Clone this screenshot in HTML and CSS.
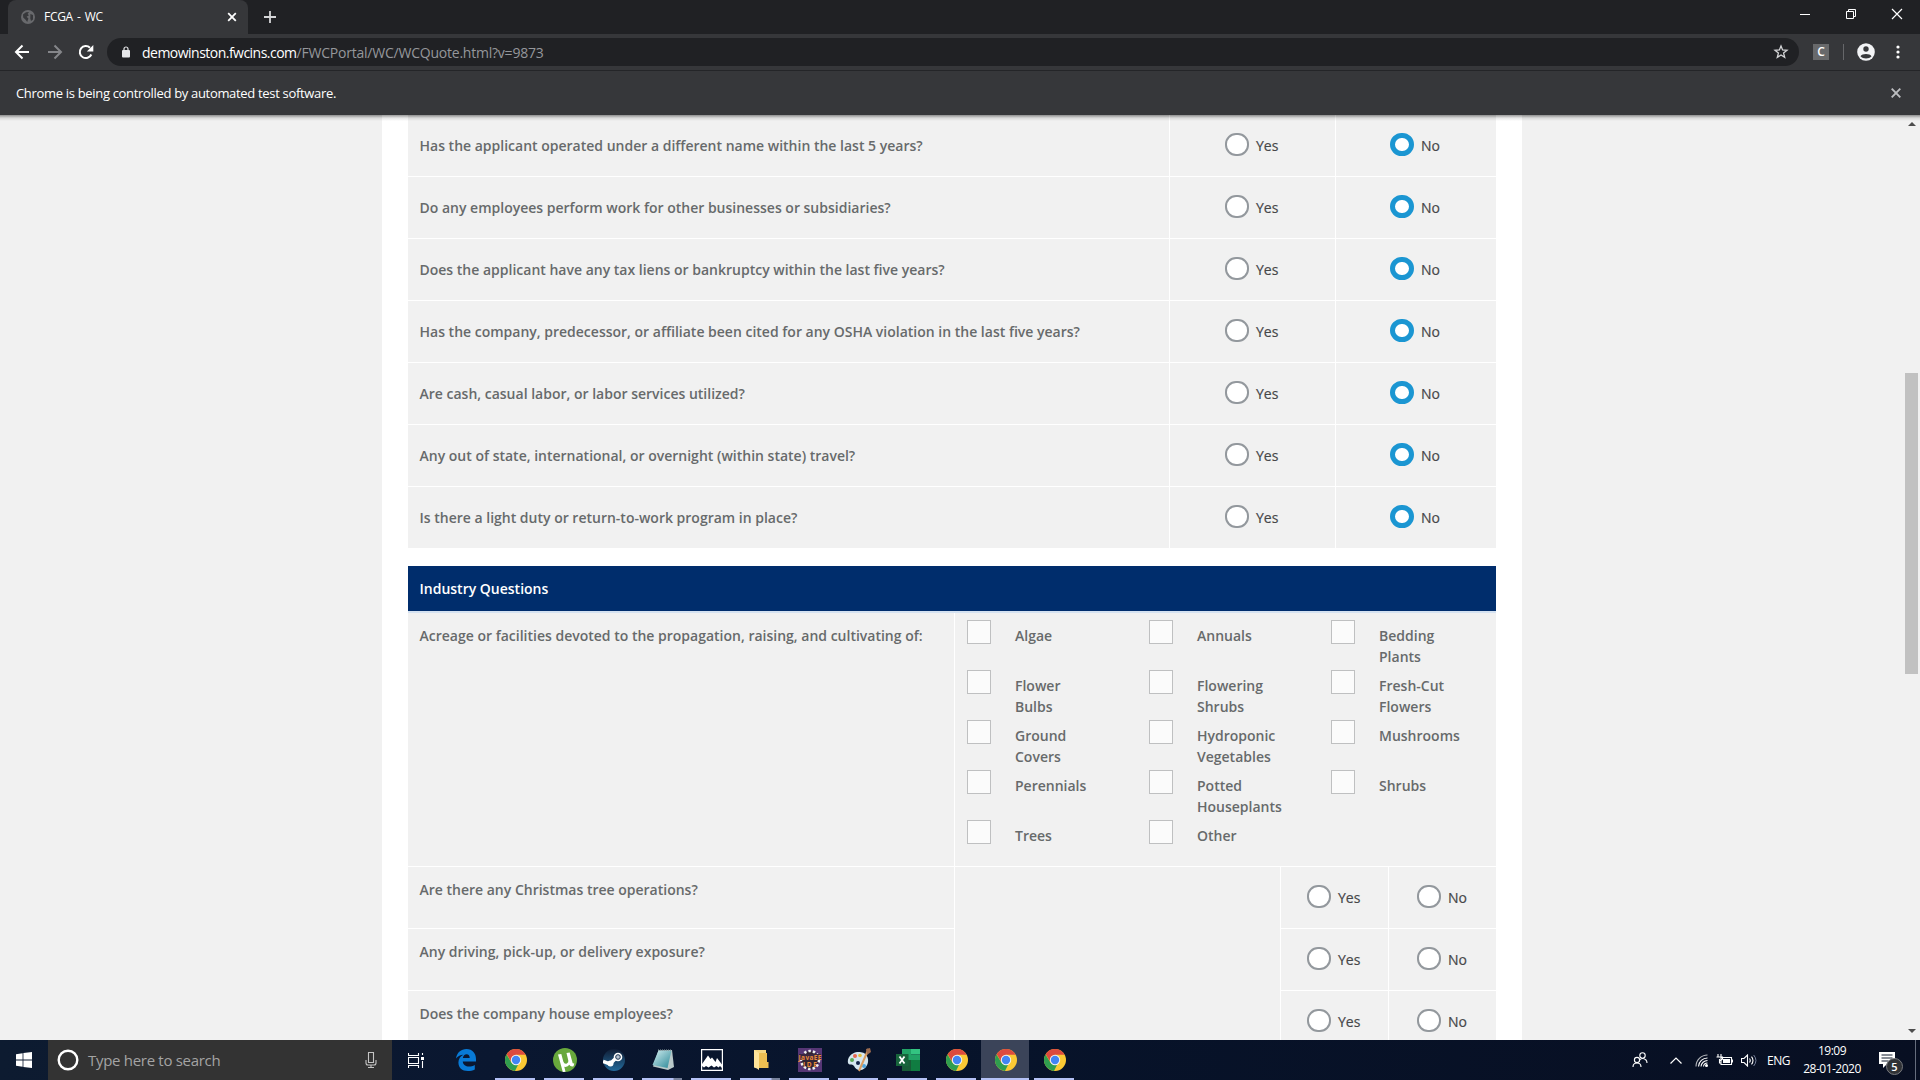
FILE: index.html
```html
<!DOCTYPE html>
<html lang="en">
<head>
<meta charset="utf-8">
<title>FCGA - WC</title>
<link rel="stylesheet" href="styles.css">
</head>
<body>
<svg class="defs" width="0" height="0">
  <defs>
    <symbol id="chrome" viewBox="0 0 22 22">
      <circle cx="11" cy="11" r="11" fill="#fbc934"/>
      <path d="M11 0A11 11 0 0 1 20.6 5.7H11L6.6 13.5 1.7 5.2A11 11 0 0 1 11 0z" fill="#dd4b3e"/>
      <path d="M1.5 5.4L6.5 13.8 11 16.2 13.2 15.6 10 21.95A11 11 0 0 1 1.5 5.4z" fill="#2f9e4f"/>
      <circle cx="11" cy="11" r="5.2" fill="#f4f4f0"/>
      <circle cx="11" cy="11" r="4.2" fill="#4285f4"/>
    </symbol>
  </defs>
</svg>
<div class="screen">
  <header class="tabs">
    <div class="tab">
      <svg class="favicon" width="14" height="14" viewBox="0 0 14 14"><circle cx="7" cy="7" r="7" fill="#68696c"/><path d="M2 4.5L5 2.2 8 2 6.6 4 8 5.2 5.6 6.8 7.4 8.5 6.2 12 4.6 9.8 2.2 7.6zM9.4 4L12 5v4.5L10 11l-.7-2.5z" fill="#37383b"/></svg>
      <span class="tab-title">FCGA - WC</span>
      <svg class="tab-close" width="10" height="10" viewBox="0 0 10 10"><path d="M1.2 1.2l7.6 7.6M8.8 1.2L1.2 8.8" stroke="#fff" stroke-width="1.8"/></svg>
    </div>
    <svg class="new-tab" width="12" height="12" viewBox="0 0 12 12"><path d="M6 0v12M0 6h12" stroke="#d5d6d8" stroke-width="1.8"/></svg>
    <div class="window-buttons">
      <svg width="46" height="28" viewBox="0 0 46 28"><path d="M18 14.5h10" stroke="#fff"/></svg>
      <svg width="46" height="28" viewBox="0 0 46 28"><path d="M18.5 11.5h7v7h-7zM20.5 11.500v-2h7v7h-2" fill="none" stroke="#fff"/></svg>
      <svg width="46" height="28" viewBox="0 0 46 28"><path d="M18 9l10 10M28 9L18 19" stroke="#fff" stroke-width="1.2"/></svg>
    </div>
  </header>
  <div class="toolbar">
    <svg width="32" height="36" viewBox="0 0 32 36"><path d="M22 18H9.500M15.500 11.500L9 18l6.500 6.500" fill="none" stroke="#fff" stroke-width="2"/></svg>
    <svg width="32" height="36" viewBox="0 0 32 36"><path d="M9 18h12.500M15.500 11.500L22 18l-6.500 6.500" fill="none" stroke="#85868a" stroke-width="2"/></svg>
    <svg width="32" height="36" viewBox="0 0 32 36"><path d="M20.300 20.500A6 6 0 1 1 19 13.800" fill="none" stroke="#fff" stroke-width="2"/><path d="M22.300 11v6.500h-6.500z" fill="#fff"/></svg>
    <div class="address">
      <svg width="8" height="12" viewBox="0 0 8 12"><rect y="4" width="8" height="7.500" rx="1" fill="#e6e7e9"/><path d="M2 4.500V3a2 2 0 0 1 4 0v1.500" fill="none" stroke="#e6e7e9" stroke-width="1.200"/></svg>
      <span class="url"><b>demowinston.fwcins.com</b>/FWCPortal/WC/WCQuote.html?v=9873</span>
      <svg class="star" width="16" height="16" viewBox="0 0 16 16"><path d="M8 2l1.600 4 4.400.3-3.400 2.800 1.100 4.300L8 11l-3.700 2.400 1.100-4.300L2 6.300 6.400 6z" fill="none" stroke="#d5d6d8" stroke-width="1.300"/></svg>
    </div>
    <span class="extension">C</span>
    <i class="separator"></i>
    <svg class="profile" width="18" height="18" viewBox="0 0 18 18"><circle cx="9" cy="9" r="8.800" fill="#f2f3f5"/><circle cx="9" cy="6" r="2.700" fill="#37383b"/><path d="M3.500 13.200C5 10.200 13 10.200 14.500 13.200 12 16.200 6 16.200 3.500 13.200z" fill="#37383b"/></svg>
    <svg class="dots" width="4" height="16" viewBox="0 0 4 16"><g fill="#fff"><circle cx="2" cy="3" r="1.600"/><circle cx="2" cy="8" r="1.600"/><circle cx="2" cy="13" r="1.600"/></g></svg>
  </div>
  <div class="infobar">
    <span>Chrome is being controlled by automated test software.</span>
    <svg width="10" height="10" viewBox="0 0 10 10"><path d="M.7.7l8.600 8.600M9.300.7L.7 9.300" stroke="#bcbdc0" stroke-width="1.900"/></svg>
  </div>

  <div class="viewport">
    <main class="page">
      <section class="general">
        <div class="row"><p>Has the applicant operated under a different name within the last 5 years?</p><label><i class="radio"></i>Yes</label><label><i class="radio on"></i>No</label></div>
        <div class="row"><p>Do any employees perform work for other businesses or subsidiaries?</p><label><i class="radio"></i>Yes</label><label><i class="radio on"></i>No</label></div>
        <div class="row"><p>Does the applicant have any tax liens or bankruptcy within the last five years?</p><label><i class="radio"></i>Yes</label><label><i class="radio on"></i>No</label></div>
        <div class="row"><p>Has the company, predecessor, or affiliate been cited for any OSHA violation in the last five years?</p><label><i class="radio"></i>Yes</label><label><i class="radio on"></i>No</label></div>
        <div class="row"><p>Are cash, casual labor, or labor services utilized?</p><label><i class="radio"></i>Yes</label><label><i class="radio on"></i>No</label></div>
        <div class="row"><p>Any out of state, international, or overnight (within state) travel?</p><label><i class="radio"></i>Yes</label><label><i class="radio on"></i>No</label></div>
        <div class="row"><p>Is there a light duty or return-to-work program in place?</p><label><i class="radio"></i>Yes</label><label><i class="radio on"></i>No</label></div>
      </section>
      <section class="industry">
        <h2>Industry Questions</h2>
        <div class="acreage">
          <p>Acreage or facilities devoted to the propagation, raising, and cultivating of:</p>
          <div class="options">
            <label><i class="box"></i><span>Algae</span></label>
            <label><i class="box"></i><span>Annuals</span></label>
            <label><i class="box"></i><span>Bedding<br>Plants</span></label>
            <label><i class="box"></i><span>Flower<br>Bulbs</span></label>
            <label><i class="box"></i><span>Flowering<br>Shrubs</span></label>
            <label><i class="box"></i><span>Fresh-Cut<br>Flowers</span></label>
            <label><i class="box"></i><span>Ground<br>Covers</span></label>
            <label><i class="box"></i><span>Hydroponic<br>Vegetables</span></label>
            <label><i class="box"></i><span>Mushrooms</span></label>
            <label><i class="box"></i><span>Perennials</span></label>
            <label><i class="box"></i><span>Potted<br>Houseplants</span></label>
            <label><i class="box"></i><span>Shrubs</span></label>
            <label><i class="box"></i><span>Trees</span></label>
            <label><i class="box"></i><span>Other</span></label>
          </div>
        </div>
        <div class="details">
          <p>Are there any Christmas tree operations?</p><div class="blank"></div><label><i class="radio"></i>Yes</label><label><i class="radio"></i>No</label>
          <p>Any driving, pick-up, or delivery exposure?</p><label><i class="radio"></i>Yes</label><label><i class="radio"></i>No</label>
          <p>Does the company house employees?</p><label><i class="radio"></i>Yes</label><label><i class="radio"></i>No</label>
        </div>
      </section>
    </main>
    <div class="scrollbar">
      <svg width="8" height="4" viewBox="0 0 8 4"><path d="M0 4l4-4 4 4z" fill="#4d4d4d"/></svg>
      <i class="thumb"></i>
      <svg class="down" width="8" height="4" viewBox="0 0 8 4"><path d="M0 0l4 4 4-4z" fill="#4d4d4d"/></svg>
    </div>
  </div>

  <footer class="taskbar">
    <div class="start"><svg width="16" height="16" viewBox="0 0 16 16"><path d="M0 2.200L6.600 1.300V7.600H0zM7.400 1.100L16 0v7.600H7.400zM0 8.400h6.600v6.300L0 13.800zM7.400 8.400H16V16L7.400 14.900z" fill="#fff"/></svg></div>
    <div class="search">
      <svg width="22" height="22" viewBox="0 0 22 22"><circle cx="11" cy="11" r="9.300" fill="none" stroke="#fff" stroke-width="2.400"/></svg>
      <span>Type here to search</span>
      <svg class="mic" width="12" height="18" viewBox="0 0 12 18"><path d="M3.500 1.500h5v10h-5zM1 9v3q0 2 2 2h6q2 0 2-2V9M6 14v2.500M3 16.500h6" fill="none" stroke="#c4c4c4" stroke-width="1.100"/></svg>
    </div>
    <div class="apps">
      <div class="app idle"><svg width="16" height="15" viewBox="0 0 16 15"><path d="M.5 0v2.500h10V0M.5 15v-2.500h10V15M.5 4.500h10v6H.5zM14.500 0v2M14.500 8v7" fill="none" stroke="#fff" stroke-width="1.100"/><path d="M13 4h3v3h-3z" fill="#fff"/></svg></div>
      <div class="app idle"><svg width="20" height="22" viewBox="0 0 20 22"><path d="M0 9.500C1 3.500 5 0 10.500 0 16.500 0 20 4.500 20 10v2.500H6.800c.2 3.500 3 5 6 5 2.200 0 4.200-.6 6-1.600v4.500c-2 1-4.500 1.600-7 1.600C6 22 2.400 18.500 2.400 13.500c0-3.700 2-6.500 5-7.800C4.500 5.700 1.800 7.200 0 9.500zM6.900 9h6.800c0-2.500-1-3.800-3.100-3.800C8.500 5.200 7.200 6.800 6.900 9z" fill="#087ad6"/></svg></div>
      <div class="app"><svg width="22" height="22"><use href="#chrome"/></svg></div>
      <div class="app"><svg width="24" height="24" viewBox="0 0 24 24"><circle cx="12" cy="12" r="12" fill="#68a83c"/><path d="M5 6.500l3.300-.6 2 7.500q1 3 3.500 2.200 2-.8 1.500-3L13.500 5l3.200-.5 3 10.800 1.600.2-.8 2.800q-3.200.6-4.200-1.500-1.500 2.500-5 2l1.200 5-2.700.1z" fill="#fff"/></svg></div>
      <div class="app"><svg width="22" height="22" viewBox="0 0 22 22"><defs><linearGradient id="st" x2="0" y2="1"><stop stop-color="#101d35"/><stop offset="1" stop-color="#236a9b"/></linearGradient></defs><circle cx="11" cy="11" r="11" fill="url(#st)"/><path d="M0 12.500l7 2.500L14 8" fill="none" stroke="#fff" stroke-width="3.500"/><circle cx="7.500" cy="14.500" r="3" fill="#fff"/><circle cx="15" cy="8" r="4.300" fill="#fff"/><circle cx="15" cy="8" r="2.300" fill="#b7c3d1" stroke="#17314e"/></svg></div>
      <div class="app stacked"><svg width="24" height="24" viewBox="0 0 24 24"><defs><linearGradient id="np" x2="1" y2="1"><stop stop-color="#d3eff1"/><stop offset="1" stop-color="#2a8796"/></linearGradient></defs><path d="M7.500 2.500L21 2 23 19 17 22 2 18.500z" fill="#b9c9c9"/><path d="M7.500 2.500L20.500 2.500 16.500 20 1.500 17z" fill="url(#np)"/><path d="M7 2.300h14" stroke="#8a9da0" stroke-width="1.500" stroke-dasharray="1 1"/></svg></div>
      <div class="app"><svg width="22" height="22" viewBox="0 0 22 22"><path d="M.6.6h20.800v20.800H.6z" fill="none" stroke="#fff" stroke-width="1.200"/><path d="M1 15l6-8.500 2.500 3.500 1.500-1.500 3.500 4.500 1.500-4 5 6.500V19l-2-2-1.500 1.500-2-1.500-2.500 1.500-2.500-2-3 2L5 17l-2 1.500L1 17z" fill="#fff"/></svg></div>
      <div class="app stacked"><svg width="16" height="22" viewBox="0 0 16 22"><path d="M1 1h12v17H1z" fill="#f6d782"/><path d="M7 4h7v9h1.500v6H5V4z" fill="#eebf52"/><path d="M1 1l5 3v17l-2-1.500-3-1z" fill="#ffe49a"/></svg></div>
      <div class="app"><svg width="24" height="24" viewBox="0 0 24 24"><rect width="24" height="24" fill="#563675"/><circle cx="12" cy="12" r="9" fill="#312433" stroke="#eee" stroke-width="2.500" stroke-dasharray="2.500 2"/><path d="M1 6h22v6H1z" fill="#3a2740"/><text x="0.500" y="11.500" class="ide" textLength="23">JavaEE</text><text x="5" y="18.800" class="ide" textLength="14">IDE</text></svg></div>
      <div class="app"><svg width="24" height="24" viewBox="0 0 24 24"><path d="M10 4C4 5 0 10 1 15c1 3 4 0 6 3 2 4 6 6 11 2 4-4 4-10 1-13-2-3-5-3-9-3z" fill="#d5e6ef"/><circle cx="5" cy="12" r="2" fill="#5ca954"/><circle cx="8" cy="8" r="2" fill="#e86850"/><circle cx="13" cy="7.500" r="1.800" fill="#e6be3b"/><circle cx="17" cy="18" r="2" fill="#4da4dd"/><circle cx="11" cy="15" r="2" fill="#142448"/><path d="M21.500 1L12 23" stroke="#d99d62" stroke-width="2"/><path d="M19 1l4-1 1 4-4 3z" fill="#9c6c50"/></svg></div>
      <div class="app"><svg width="24" height="22" viewBox="0 0 24 22"><path d="M6 0h9v11H6z" fill="#21a366"/><path d="M15 0h9v5.500h-9z" fill="#33c481"/><path d="M15 5.500h9V11h-9z" fill="#21a366"/><path d="M6 11h9v11H6z" fill="#185c37"/><path d="M15 11h9v11h-9z" fill="#107c41"/><path d="M0 5h12.500v12H0z" fill="#17643b"/><path d="M3.500 7.500l5 7M8.500 7.500l-5 7" stroke="#fff" stroke-width="1.800"/></svg></div>
      <div class="app"><svg width="22" height="22"><use href="#chrome"/></svg></div>
      <div class="app active"><svg width="22" height="22"><use href="#chrome"/></svg></div>
      <div class="app"><svg width="22" height="22"><use href="#chrome"/></svg></div>
    </div>
    <div class="tray">
      <svg class="people" width="16" height="16" viewBox="0 0 16 16"><g fill="none" stroke="#fff" stroke-width="1.100"><circle cx="10.500" cy="3.500" r="2.700"/><circle cx="5" cy="8" r="2.600"/><path d="M1 15q0-4 4-4t4 4M7.500 8q3-3 6.500 0 1 1 1 3"/></g></svg>
      <svg class="caret" width="12" height="7" viewBox="0 0 12 7"><path d="M.5 6.500L6 1l5.500 5.500" fill="none" stroke="#fff" stroke-width="1.200"/></svg>
      <svg class="wifi" width="13" height="13" viewBox="0 0 13 13"><g fill="none" stroke="#fff" stroke-width="1.100"><path d="M1 12.500A11.500 11.500 0 0 1 12.500 1" opacity=".7"/><path d="M3.500 12.500a9 9 0 0 1 9-8.500M6 12.500A6.500 6.500 0 0 1 12.500 6.500M8.500 12.500a4 4 0 0 1 4-3.500"/></g><circle cx="11.500" cy="11.500" r="1.500" fill="#fff"/></svg>
      <svg class="battery" width="17" height="12" viewBox="0 0 17 12"><path d="M5 3.500h10.500v7H5zM16.500 5.500v3M2 0v3M5 0v3M.5 3h6v2q-3 3-3 0v4h2" fill="none" stroke="#fff" stroke-width="1.100"/><path d="M7 5h7v4H7z" fill="#fff"/></svg>
      <svg class="volume" width="16" height="13" viewBox="0 0 16 13"><path d="M.5 4.500h2.500L6.500 1v11L3 8.500H.5zM8.500 4.500q1.500 2 0 4M10.500 2.700q3 3.800 0 7.600" fill="none" stroke="#fff" stroke-width="1.100"/><path d="M12.700 1q4.500 5.500 0 11" fill="none" stroke="#76809a"/></svg>
      <span class="lang">ENG</span>
      <div class="clock"><span>19:09</span><span>28-01-2020</span></div>
      <div class="notifications"><svg width="16" height="16" viewBox="0 0 16 16"><path d="M0 0h16v12H8l-4 4v-4H0z" fill="#fff"/><path d="M2.500 3h11M2.500 6h11M2.500 9h7" stroke="#111a2d" stroke-width="1.100"/></svg><b>5</b></div>
      <i class="show-desktop"></i>
    </div>
  </footer>
</div>
</body>
</html>
```
FILE: styles.css
```css
* { box-sizing: border-box; }
body { margin: 0; font-family: "Open Sans", sans-serif; background: #f1f1f1; }
p, h2 { margin: 0; }
svg { display: block; flex: none; }
.defs { position: absolute; }
.screen { width: 1920px; height: 1080px; overflow: hidden; display: flex; flex-direction: column; }

.tabs { height: 34px; flex: none; background: #202124; display: flex; align-items: center; padding-left: 8px; }
.tab { width: 240px; height: 34px; background: #36373a; border-radius: 8px 8px 0 0; display: flex; align-items: center; padding: 0 11px 0 13px; }
.tab-title { margin-left: 9px; padding-bottom: 1px; flex: 1; color: #fff; font-size: 12px; letter-spacing: -.3px; word-spacing: 1.300px; }
.new-tab { margin-left: 16px; }
.window-buttons { margin-left: auto; display: flex; align-self: flex-start; }

.toolbar { height: 37px; flex: none; background: #36373a; border-bottom: 1px solid #242528; display: flex; align-items: center; padding-left: 7px; }
.address { width: 1692px; height: 28px; margin-left: 4px; border-radius: 14px; background: #202124; display: flex; align-items: center; padding: 0 10px 0 15px; }
.url { flex: 1; margin-left: 12px; color: #95979b; font-size: 14px; letter-spacing: -.22px; }
.url b { color: #fff; font-weight: 400; letter-spacing: -.52px; }
.extension { width: 16px; height: 16px; margin-left: 14px; background: #68696b; color: #fff; font: 600 12px/16px "Open Sans", sans-serif; text-align: center; }
.separator { width: 1px; height: 16px; margin-left: 14px; background: #66676a; }
.profile { margin-left: 13px; }
.dots { margin-left: 21px; }

.infobar { height: 44px; flex: none; background: #36373a; display: flex; align-items: center; justify-content: space-between; padding: 0 19px 0 16px; color: #fff; font-size: 13px; letter-spacing: -.32px; }

.viewport { height: 925px; flex: none; display: flex; justify-content: space-between; overflow: hidden; background: linear-gradient(#8d8d8d, #d9d9d9 3px, #f1f1f1 6px); padding-left: 382px; }
.page { width: 1140px; padding: 0 26px; background: linear-gradient(#9a9a9a, #e6e6e6 3px, #fff 6px); }
.general { display: grid; gap: 1px; }
.row { height: 61px; display: grid; grid-template-columns: 761px 165px 160px; gap: 1px; }
.row > *, .acreage > *, .details > * { background: #f1f1f1; }
.row:first-child > * { background: linear-gradient(#8d8d8d, #d9d9d9 3px, #f1f1f1 6px); }
p { color: #676a6b; font-size: 14px; font-weight: 600; line-height: 21px; padding: 20px 11.500px; }
.row label, .details label { display: flex; align-items: flex-start; padding: 18px 0 0 55px; color: #464749; font-size: 14px; font-weight: 500; line-height: 26px; -webkit-text-stroke: .2px #464749; }
.row label:last-child { padding-left: 54px; }
.radio { width: 24px; height: 23px; margin-right: 7px; border: 2px solid #93989d; border-radius: 11px; background: #fff; flex: none; }
.radio.on { border: 5px solid #1b96d2; border-radius: 12px; }

.industry { margin-top: 18px; }
h2 { height: 47px; background: #002d6c; border-bottom: 2px solid #d5e2f1; color: #fff; padding-left: 11.500px; font-size: 14px; line-height: 46px; font-weight: 600; }
.acreage { height: 253px; display: grid; grid-template-columns: 546px 541px; gap: 1px; }
.acreage p { padding-top: 12px; }
.options { display: grid; grid-template-columns: repeat(3, 182px); grid-auto-rows: 50px; padding: 7px 0 0 12px; overflow: hidden; }
.options label { display: flex; color: #676a6b; font-size: 14px; line-height: 21px; font-weight: 600; }
.options span { margin: 5px 0 0 24px; }
.box { width: 24px; height: 24px; border: 1px solid #bfc0c1; background: #fbfbfb; flex: none; }
.details { margin-top: 1px; display: grid; grid-template-columns: 546px 325px 107px 107px; grid-auto-rows: 61px; gap: 1px; }
.details p { padding-top: 12px; grid-column: 1; }
.details .blank { grid-area: 1 / 2 / span 3 / 3; }
.details label { padding-left: 26px; }
.details label:nth-of-type(even) { padding-left: 28px; }

.scrollbar { width: 17px; display: flex; flex-direction: column; align-items: center; padding-top: 7px; }
.thumb { width: 13px; height: 301px; margin-top: 247px; background: #c1c1c1; }
.down { margin: auto 0 7px; }

.taskbar { height: 40px; flex: none; display: flex; background: linear-gradient(90deg, #0d1b30 0, #0a1730 500px, #07132a 1000px, #080f22 1920px); color: #fff; }
.start { width: 48px; display: grid; place-items: center; }
.search { width: 344px; background: #333; display: flex; align-items: center; padding: 0 15px 0 9px; color: #a4a4a4; font-size: 15px; letter-spacing: -.3px; }
.search span { flex: 1; margin-left: 9px; }
.apps { display: flex; gap: 1px; padding-left: 1px; }
.app { width: 48px; height: 40px; display: grid; place-items: center; background: linear-gradient(#b4c1f5, #b4c1f5) center bottom / 40px 2px no-repeat; }
.app.idle { background: none; }
.app:first-child { padding-right: 2px; }
.app:nth-child(n+3) { padding-left: 1px; }
.app.stacked { background: linear-gradient(90deg, #b4c1f5 31px, #78829c 32px) center bottom / 40px 2px no-repeat; }
.app.active { background: linear-gradient(#b4c1f5, #b4c1f5) center bottom / 48px 2px no-repeat, #3b4459; }
.ide { font: 700 6.500px "Open Sans", sans-serif; fill: #e98a38; }
.tray { margin-left: auto; display: flex; align-items: center; }
.caret { margin-left: 22px; }
.wifi { margin-left: 13px; }
.battery { margin-left: 8px; }
.volume { margin-left: 8px; }
.lang { width: 24px; margin-left: 10px; font-size: 12px; letter-spacing: -.5px; }
.clock { width: 60px; margin-left: 11px; display: flex; flex-direction: column; align-items: center; font-size: 12px; line-height: 18px; letter-spacing: -.5px; white-space: nowrap; }
.notifications { position: relative; width: 16px; margin-left: 17px; }
.notifications b { position: absolute; left: 7px; top: 6px; width: 17px; height: 17px; border-radius: 50%; border: 1px solid #77797d; background: #303236; font: 600 11px/15px "Open Sans", sans-serif; text-align: center; }
.show-desktop { width: 5px; height: 40px; margin-left: 20px; border-left: 1px solid #666d7d; }
```
